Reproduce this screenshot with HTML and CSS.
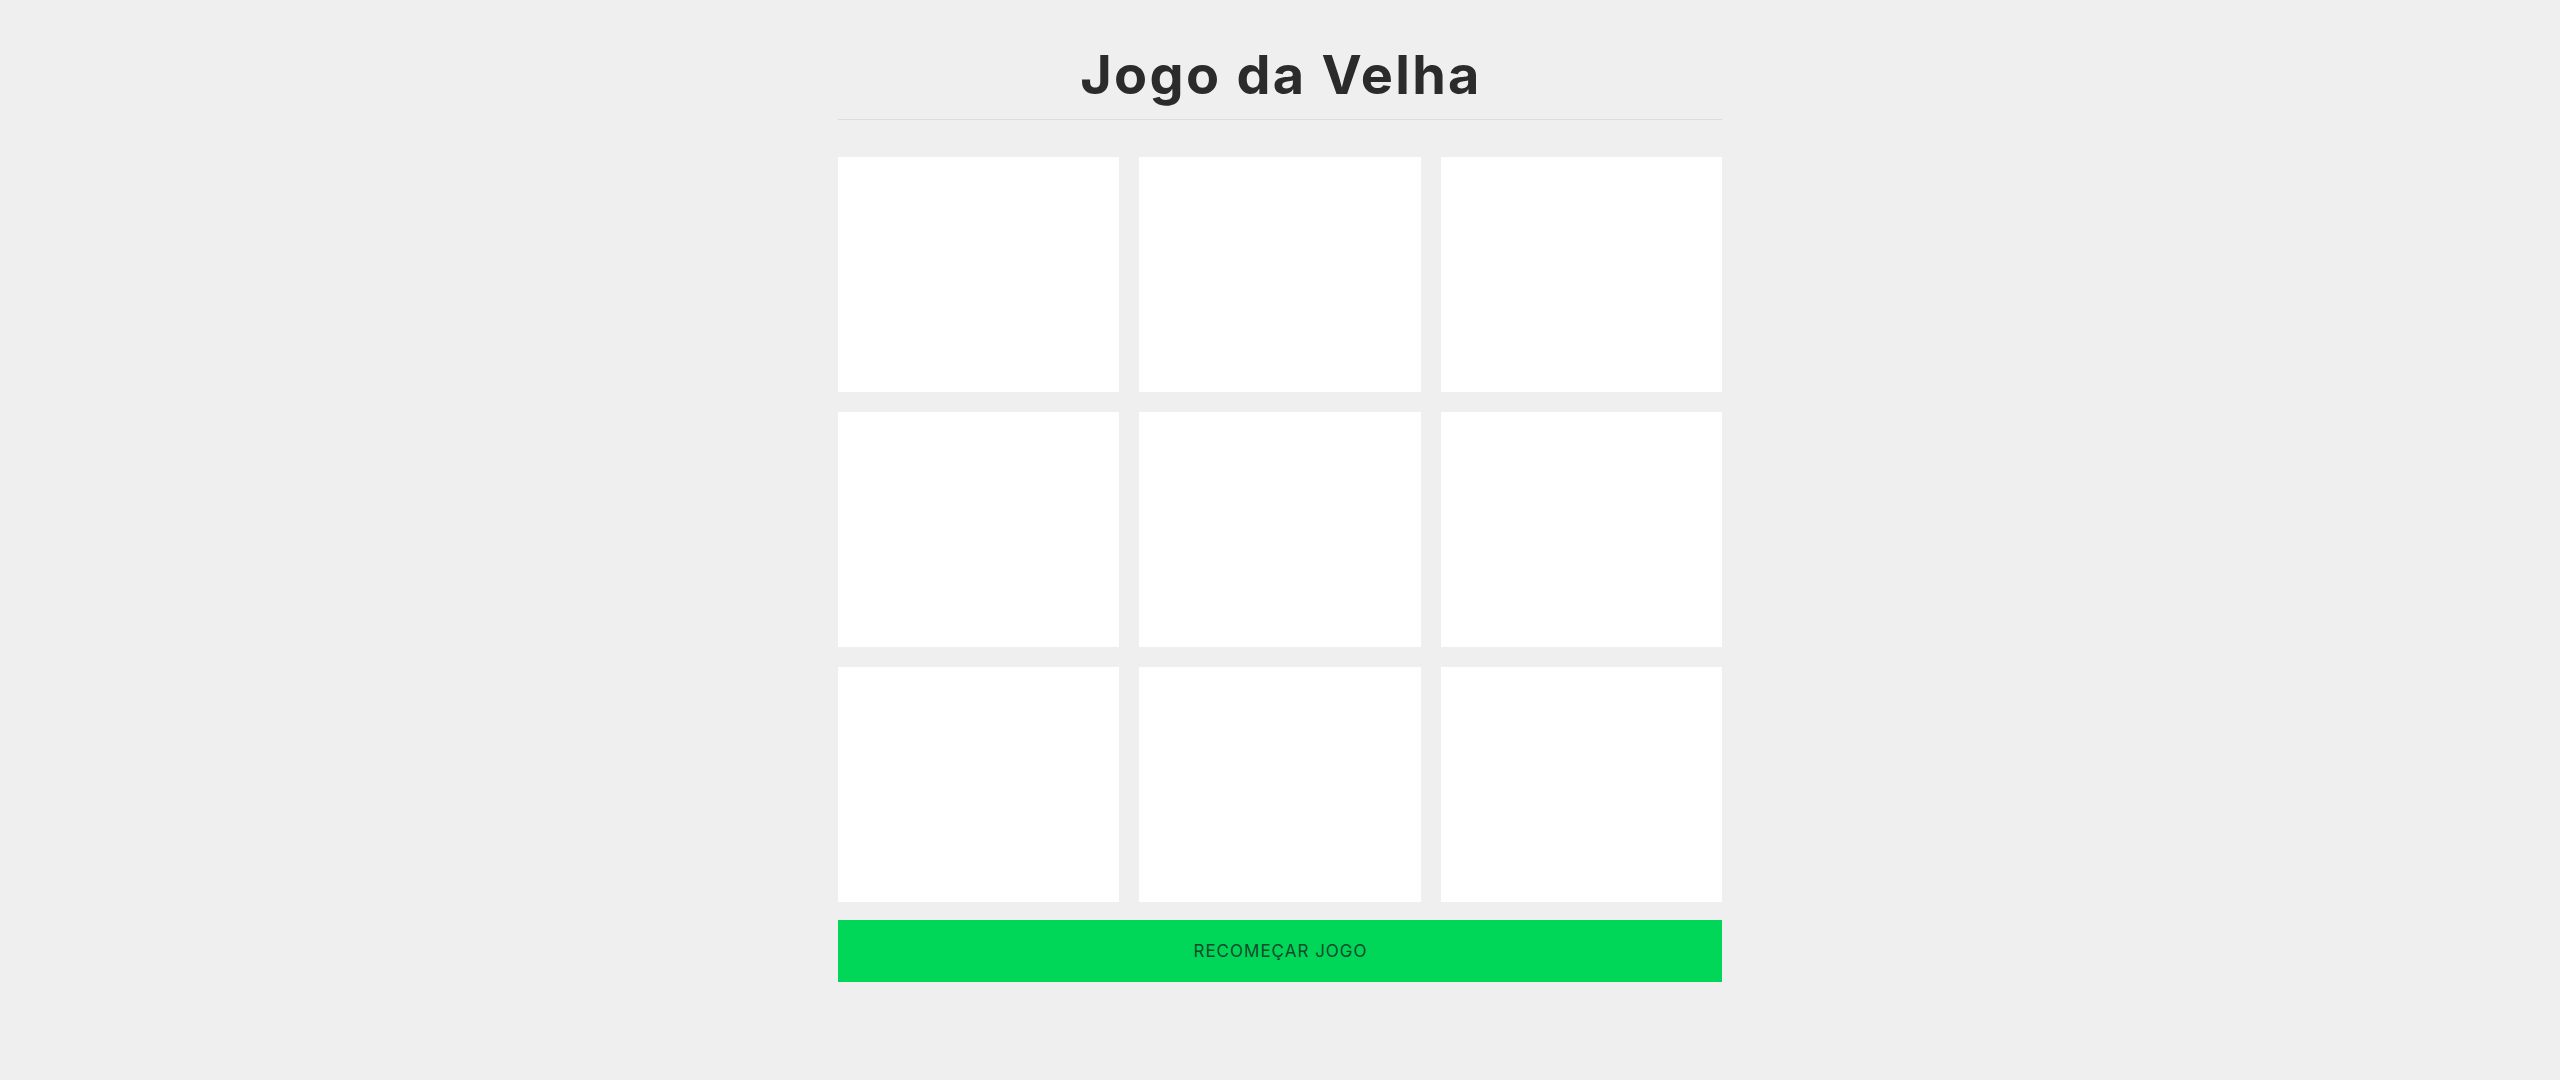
FILE: index.html
```html
<!DOCTYPE html>
<html lang="pt-BR">
<head>
<meta charset="utf-8">
<title>Jogo da Velha</title>
<link rel="stylesheet" href="styles.css">
</head>
<body>
<main class="game">
  <h1 class="title">Jogo da Velha</h1>
  <div class="board">
    <div class="cell"></div>
    <div class="cell"></div>
    <div class="cell"></div>
    <div class="cell"></div>
    <div class="cell"></div>
    <div class="cell"></div>
    <div class="cell"></div>
    <div class="cell"></div>
    <div class="cell"></div>
  </div>
  <button class="restart" type="button">RECOMEÇAR JOGO</button>
</main>
</body>
</html>
```
FILE: styles.css
```css
* { box-sizing: border-box; }
html, body { margin: 0; padding: 0; }
body {
  background: #efefef;
  font-family: Inter, "Noto Sans", sans-serif;
  color: #2b2b2b;
}
.game {
  width: 884px;
  margin: 0 auto;
  display: flex;
  flex-direction: column;
}
.title {
  margin: 0;
  padding-top: 48px;
  padding-bottom: 17px;
  padding-left: 2px;
  font-size: 54px;
  line-height: 1;
  font-weight: 700;
  letter-spacing: 2.3px;
  text-align: center;
  color: #2b2b2b;
  border-bottom: 1px solid #dcdcdc;
}
.board {
  margin-top: 37px;
  display: grid;
  grid-template-columns: repeat(3, 1fr);
  grid-template-rows: repeat(3, 235px);
  gap: 20px;
}
.cell {
  background: #ffffff;
}
.restart {
  margin-top: 18px;
  height: 62px;
  border: none;
  background: #00d658;
  color: #124a2c;
  font-family: Inter, "Noto Sans", sans-serif;
  font-size: 17px;
  font-weight: 400;
  letter-spacing: 1px;
  padding: 0 0 0 1px;
  cursor: pointer;
}
```
